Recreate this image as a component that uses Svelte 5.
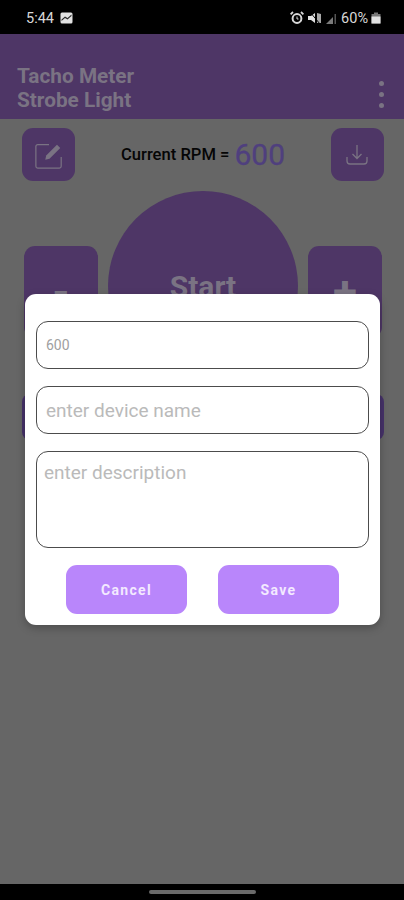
<script>
  let rpm = 600;
  let name = '';
  let description = '';
</script>

<div class="screen">
  <div class="statusbar">
    <div class="status-left">
      <span>5:44</span>
      <svg width="13" height="12" viewBox="0 0 13 12">
        <rect x="0.5" y="0.5" width="12" height="11" rx="1.5" fill="#e2e2e2" />
        <path d="M1.5 7.5 L5 4.5 L7.5 6 L11.5 2.5 V4 L7.5 7.5 L5 6 L1.5 9Z" fill="#2a2a2a" />
      </svg>
    </div>
    <div class="status-right">
      <svg width="14" height="14" viewBox="0 0 14 14">
        <circle cx="7" cy="7.5" r="4.4" fill="none" stroke="#d8d8d8" stroke-width="2" />
        <path d="M7 5.5 V8 H8.5" fill="none" stroke="#d8d8d8" stroke-width="1" />
        <path d="M0.6 3.4 L3 1 M13.4 3.4 L11 1" stroke="#d8d8d8" stroke-width="1.8" />
      </svg>
      <svg class="mute" width="13" height="12" viewBox="0 0 13 12">
        <path d="M0 4 H3 L7 1 V11 L3 8 H0Z" fill="#e0e0e0" />
        <path d="M9 1 L13 2 V11 H9Z" fill="#a8a8a8" />
        <path d="M2 0 L12 12" stroke="#000" stroke-width="1" />
      </svg>
      <svg class="signal" width="11" height="11" viewBox="0 0 11 11">
        <path d="M0 11 L7 4 V11Z" fill="#7a7a7a" />
        <rect x="8.5" y="1" width="1.5" height="10" fill="#555" />
      </svg>
      <span class="pct">60%</span>
      <svg width="10" height="12" viewBox="0 0 10 12">
        <path d="M3 0.5 H7 V2 H9.5 V11.5 H0.5 V2 H3Z" fill="#777" />
        <rect x="0.5" y="4.5" width="9" height="7" fill="#e2e2e2" />
      </svg>
    </div>
  </div>

  <header class="appbar">
    <h1>Tacho Meter<br />Strobe Light</h1>
    <div class="dots"><i></i><i></i><i></i></div>
  </header>

  <main class="body">
    <div class="top-row">
      <button class="square" aria-label="edit">
        <svg width="30" height="30" viewBox="0 0 32 32" fill="none" stroke="#7a7383" stroke-width="1.3">
          <path d="M16 5 H4 a2 2 0 0 0 -2 2 V28 a2 2 0 0 0 2 2 H27 a2 2 0 0 0 2 -2 V18" />
          <path d="M12 21 L13 16.5 L24.5 5 L28 8.5 L16.5 20Z" fill="#7a7383" stroke="none" />
        </svg>
      </button>
      <div class="rpm">
        <span class="rpm-label">Current RPM =</span>
        <span class="rpm-value">{rpm}</span>
      </div>
      <button class="square" aria-label="download">
        <svg width="24" height="24" viewBox="0 0 24 24" fill="none" stroke="#7a7383" stroke-width="1.3">
          <path d="M12 2 V15 M7.5 11 L12 15.5 L16.5 11" />
          <path d="M2 14 V18 a3 3 0 0 0 3 3 H19 a3 3 0 0 0 3 -3 V14" />
        </svg>
      </button>
    </div>

    <div class="controls">
      <button class="side">-</button>
      <button class="start">Start</button>
      <button class="side">+</button>
    </div>

    <div class="wide-bar"></div>
  </main>

  <div class="navbar"><span class="pill"></span></div>

  <div class="dialog">
    <input class="field small" type="text" value={rpm} />
    <input class="field" type="text" placeholder="enter device name" bind:value={name} />
    <textarea class="field area" placeholder="enter description" bind:value={description}></textarea>
    <div class="actions">
      <button class="action">Cancel</button>
      <button class="action">Save</button>
    </div>
  </div>
</div>

<style>
  :global(body) {
    background: #000;
  }
  .screen {
    position: relative;
    width: 404px;
    height: 900px;
    display: flex;
    flex-direction: column;
    overflow: hidden;
    font-family: Roboto, "Liberation Sans", sans-serif;
    background: #666;
  }
  .statusbar {
    height: 34px;
    flex: none;
    background: #000;
    color: #d8d8d8;
    font-size: 14.5px;
    display: flex;
    align-items: center;
    justify-content: space-between;
    padding: 8px 23px 6px 26px;
    box-sizing: border-box;
  }
  .status-left {
    display: flex;
    align-items: center;
    gap: 6px;
  }
  .status-right {
    display: flex;
    align-items: center;
    gap: 3px;
  }
  .mute {
    margin-left: 1px;
  }
  .signal {
    margin-left: 2px;
  }
  .pct {
    margin-left: 1px;
  }
  .appbar {
    height: 85px;
    flex: none;
    background: #4e3666;
    display: flex;
    align-items: flex-end;
    justify-content: space-between;
    padding: 0 20px 7px 17px;
    box-sizing: border-box;
  }
  h1 {
    margin: 0;
    font-size: 20.8px;
    line-height: 24px;
    font-weight: 700;
    color: #7a7383;
  }
  .dots {
    display: flex;
    flex-direction: column;
    gap: 6px;
    padding-bottom: 4px;
  }
  .dots i {
    width: 5px;
    height: 5px;
    border-radius: 50%;
    background: #7a7383;
  }
  .body {
    flex: 1;
    min-height: 0;
    padding: 9px 20px 0 22px;
    display: flex;
    flex-direction: column;
  }
  button {
    border: none;
    padding: 0;
    font-family: inherit;
  }
  .top-row {
    display: flex;
    align-items: center;
    justify-content: space-between;
  }
  .square {
    width: 53px;
    height: 53px;
    background: #4e3666;
    border-radius: 11px;
    display: flex;
    align-items: center;
    justify-content: center;
  }
  .rpm {
    display: flex;
    align-items: center;
    gap: 5px;
  }
  .rpm-label {
    font-size: 16.6px;
    font-weight: 500;
    color: #050505;
  }
  .rpm-value {
    font-size: 30px;
    font-weight: 400;
    color: #4f3f7e;
    -webkit-text-stroke: 0.3px #4f3f7e;
  }
  .controls {
    margin-top: 10px;
    display: flex;
    justify-content: space-between;
    align-items: flex-start;
    padding: 0 2px;
  }
  .side {
    width: 74px;
    height: 92px;
    margin-top: 55px;
    background: #4e3666;
    border-radius: 11px;
    color: #7a7383;
    font-size: 44px;
    font-weight: 700;
  }
  .start {
    width: 190px;
    height: 190px;
    border-radius: 50%;
    background: #4e3666;
    color: #7a7383;
    font-size: 30px;
    font-weight: 700;
  }
  .wide-bar {
    height: 46px;
    margin-top: 13px;
    background: #46326a;
    border-radius: 8px;
  }
  .navbar {
    height: 16px;
    flex: none;
    background: #000;
    display: flex;
    align-items: center;
    justify-content: center;
  }
  .pill {
    width: 107px;
    height: 4px;
    border-radius: 2px;
    background: #6a6a6a;
  }
  /* modal sits on top of the dimmed page */
  .dialog {
    position: absolute;
    left: 25px;
    top: 294px;
    width: 355px;
    height: 331px;
    box-sizing: border-box;
    padding: 27px 11px 11px;
    background: #fff;
    border-radius: 11px;
    box-shadow: 0 3px 8px rgba(0, 0, 0, 0.25);
    display: flex;
    flex-direction: column;
    gap: 17px;
  }
  .field {
    display: block;
    width: 100%;
    height: 48px;
    flex: none;
    box-sizing: border-box;
    border: 1px solid #4c4c4c;
    border-radius: 12px;
    padding: 0 9px;
    background: #fff;
    font-family: inherit;
    font-size: 19px;
    outline: none;
    resize: none;
    margin: 0;
  }
  .field::placeholder {
    color: #bababa;
    opacity: 1;
  }
  .small {
    font-size: 14px;
    color: #a0a0a0;
  }
  .area {
    height: 97px;
    padding: 10px 7px;
    line-height: 22px;
  }
  .actions {
    display: flex;
    justify-content: center;
    gap: 31px;
  }
  .action {
    width: 121px;
    height: 49px;
    border-radius: 11px;
    background: #b986fb;
    color: #f3e9ff;
    font-size: 14px;
    font-weight: 700;
    letter-spacing: 1.3px;
  }
</style>
